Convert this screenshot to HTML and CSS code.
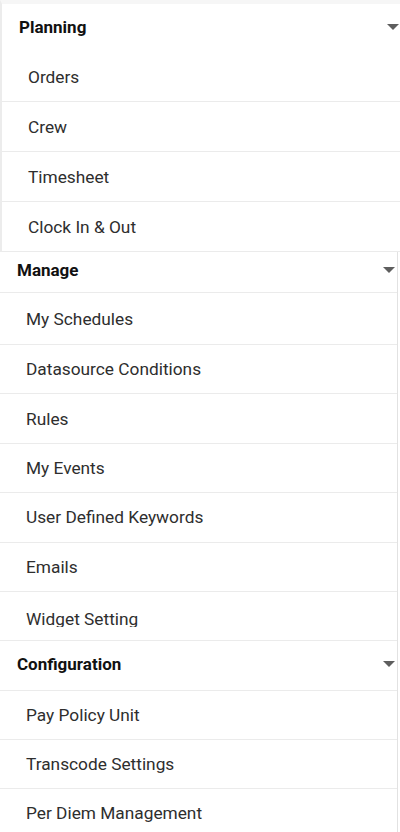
FILE: index.html
```html
<!DOCTYPE html>
<html>
<head>
<meta charset="utf-8">
<link rel="stylesheet" href="styles.css">
</head>
<body>
<div class="menu">
  <section class="group group-planning">
    <div class="head"><span>Planning</span><i class="caret"></i></div>
    <ul class="items">
      <li>Orders</li>
      <li>Crew</li>
      <li>Timesheet</li>
      <li>Clock In &amp; Out</li>
    </ul>
  </section>
  <section class="group group-manage">
    <div class="head"><span>Manage</span><i class="caret"></i></div>
    <ul class="items">
      <li>My Schedules</li>
      <li>Datasource Conditions</li>
      <li>Rules</li>
      <li>My Events</li>
      <li>User Defined Keywords</li>
      <li>Emails</li>
      <li class="clipped"><span>Widget Setting</span></li>
    </ul>
  </section>
  <section class="group group-config">
    <div class="head"><span>Configuration</span><i class="caret"></i></div>
    <ul class="items">
      <li>Pay Policy Unit</li>
      <li>Transcode Settings</li>
      <li>Per Diem Management</li>
    </ul>
  </section>
</div>
</body>
</html>
```
FILE: styles.css
```css
html, body {
  margin: 0;
  padding: 0;
  background: #ffffff;
}
body {
  font-family: Roboto, "Liberation Sans", sans-serif;
  color: #2d2d2d;
  width: 400px;
  height: 832px;
  overflow: hidden;
}
.menu {
  display: flex;
  flex-direction: column;
}
.group {
  box-sizing: border-box;
}
.items {
  list-style: none;
  margin: 0;
  padding: 0;
}
.items li {
  box-sizing: border-box;
  display: flex;
  align-items: center;
  border-bottom: 1px solid #ebebeb;
  font-size: 17.3px;
  color: #2e2e2e;
}
.head {
  box-sizing: border-box;
  display: flex;
  align-items: center;
  justify-content: space-between;
  font-size: 17px;
  font-weight: 700;
  color: #111;
}
.caret {
  width: 0;
  height: 0;
  border-left: 6px solid transparent;
  border-right: 6px solid transparent;
  border-top: 6px solid #5e5e5e;
}

/* Planning */
.group-planning {
  width: 400px;
  border-top: 4px solid #f6f6f6;
  border-left: 2px solid #ececec;
}
.group-planning .head {
  height: 49px;
  padding: 0 1px 3px 17px;
}
.group-planning .items li {
  height: 50px;
  padding-left: 26px;
}
.group-planning .items li:first-child {
  height: 49px;
}

/* Manage */
.group-manage {
  width: 398px;
  border-right: 1px solid #e2e2e2;
}
.group-manage .head {
  height: 41px;
  padding: 0 2px 4px 17px;
  border-bottom: 1px solid #ebebeb;
}
.group-manage .items li {
  height: 49.4px;
  padding-left: 26px;
}
.group-manage .items li:first-child {
  height: 52px;
}
.clipped {
  align-items: flex-start;
}
.clipped span {
  display: block;
  height: 18px;
  overflow: hidden;
  line-height: 21px;
  margin-top: 4px;
}

/* Configuration */
.group-config {
  width: 398px;
  border-right: 1px solid #e2e2e2;
}
.group-config .head {
  height: 50px;
  padding: 0 2px 3px 17px;
  border-bottom: 1px solid #ebebeb;
}
.group-config .items li {
  height: 49px;
  padding-left: 26px;
}
```
